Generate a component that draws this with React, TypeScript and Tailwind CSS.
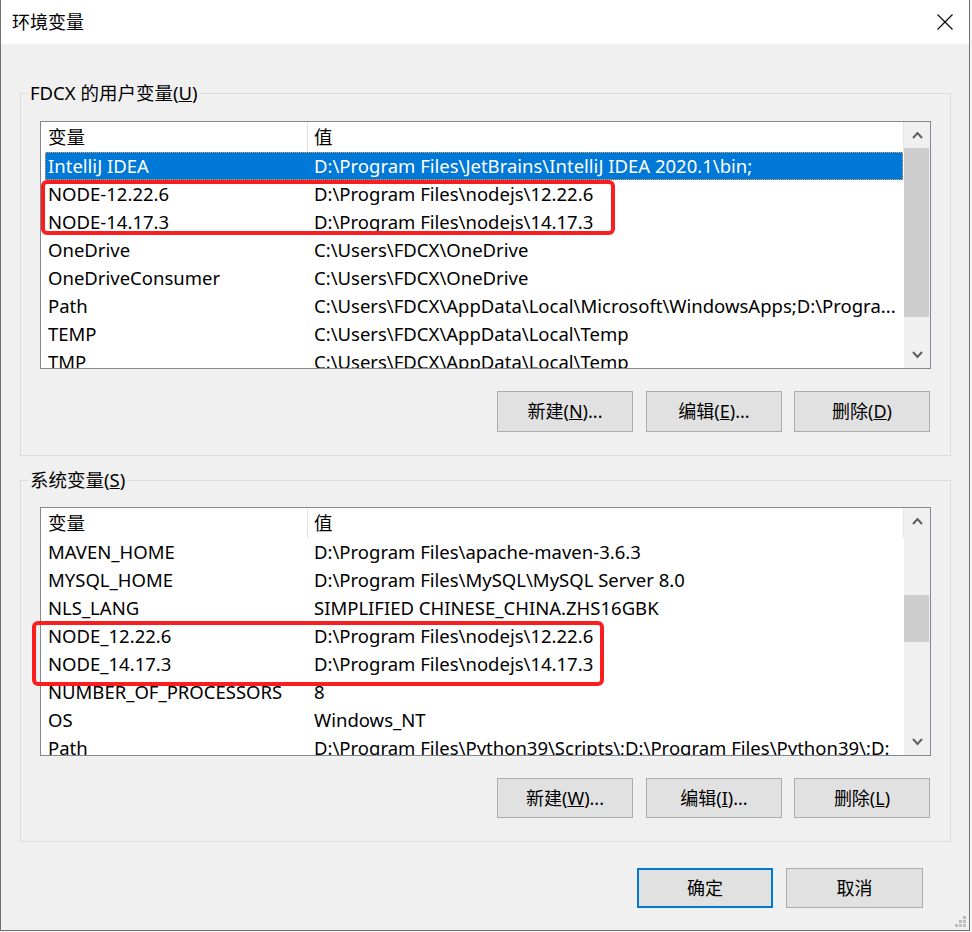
import type { ReactNode } from "react";

const FONT = "font-['Noto_Sans','Noto_Sans_CJK_SC',sans-serif]";

type Row = [string, string];

const userVars: Row[] = [
  ["IntelliJ IDEA", "D:\\Program Files\\JetBrains\\IntelliJ IDEA 2020.1\\bin;"],
  ["NODE-12.22.6", "D:\\Program Files\\nodejs\\12.22.6"],
  ["NODE-14.17.3", "D:\\Program Files\\nodejs\\14.17.3"],
  ["OneDrive", "C:\\Users\\FDCX\\OneDrive"],
  ["OneDriveConsumer", "C:\\Users\\FDCX\\OneDrive"],
  ["Path", "C:\\Users\\FDCX\\AppData\\Local\\Microsoft\\WindowsApps;D:\\Progra..."],
  ["TEMP", "C:\\Users\\FDCX\\AppData\\Local\\Temp"],
  ["TMP", "C:\\Users\\FDCX\\AppData\\Local\\Temp"],
];

const systemVars: Row[] = [
  ["MAVEN_HOME", "D:\\Program Files\\apache-maven-3.6.3"],
  ["MYSQL_HOME", "D:\\Program Files\\MySQL\\MySQL Server 8.0"],
  ["NLS_LANG", "SIMPLIFIED CHINESE_CHINA.ZHS16GBK"],
  ["NODE_12.22.6", "D:\\Program Files\\nodejs\\12.22.6"],
  ["NODE_14.17.3", "D:\\Program Files\\nodejs\\14.17.3"],
  ["NUMBER_OF_PROCESSORS", "8"],
  ["OS", "Windows_NT"],
  ["Path", "D:\\Program Files\\Python39\\Scripts\\;D:\\Program Files\\Python39\\;D:"],
];

export default function App() {
  return (
    <div className={`w-[972px] h-[932px] overflow-hidden bg-[#f5f5f5] text-black ${FONT}`}>
      <div className="relative flex h-[931px] w-[970px] flex-col border border-t-0 border-[#717171] bg-[#f0f0f0]">
        <div className="flex h-[44px] shrink-0 items-center justify-between bg-white pl-[11px] pr-[16px]">
          <span className="text-[18px] leading-none">环境变量</span>
          <svg width="16" height="16" viewBox="0 0 16 16">
            <line x1="0.5" y1="0.5" x2="15.5" y2="15.5" stroke="#000" strokeWidth="1.1" />
            <line x1="15.5" y1="0.5" x2="0.5" y2="15.5" stroke="#000" strokeWidth="1.1" />
          </svg>
        </div>

        <GroupBox
          label={<>FDCX 的用户变量(<u>U</u>)</>}
          className="mt-[37px]"
        >
          <div className="relative mt-[16px]">
            <VarList rows={userVars} selected={0} height="h-[248px]" thumb="h-[169px]" />
            {/* annotation box drawn over the list */}
            <div className="absolute left-[1px] top-[59px] h-[55px] w-[574px] rounded-[6px] border-4 border-[#fa1e1e]" />
          </div>
          <ButtonRow labels={[["新建(", "N", ")..."], ["编辑(", "E", ")..."], ["删除(", "D", ")"]]} height="h-[41px]" />
        </GroupBox>

        <GroupBox label={<>系统变量(<u>S</u>)</>} className="mt-[12px]">
          <div className="relative mt-[15px]">
            <VarList rows={systemVars} height="h-[249px]" thumb="mt-[61px] h-[47px]" />
            <div className="absolute left-[-8px] top-[114px] h-[65px] w-[572px] rounded-[6px] border-4 border-[#fa1e1e]" />
          </div>
          <ButtonRow labels={[["新建(", "W", ")..."], ["编辑(", "I", ")..."], ["删除(", "L", ")"]]} height="h-[40px]" />
        </GroupBox>

        <div className="mt-[26px] flex justify-end gap-[13px] pr-[46px]">
          <button className="h-[40px] w-[136px] border-2 border-[#0078d7] bg-[#e1e1e1] text-[18px]">
            确定
          </button>
          <button className="h-[40px] w-[137px] border border-[#adadad] bg-[#e1e1e1] text-[18px]">
            取消
          </button>
        </div>

        <svg className="absolute bottom-[3px] right-[3px]" width="11" height="11" viewBox="0 0 11 11">
          <rect x="8" y="0" width="3" height="3" fill="#bdbdbd" />
          <rect x="4" y="4" width="3" height="3" fill="#bdbdbd" />
          <rect x="8" y="4" width="3" height="3" fill="#bdbdbd" />
          <rect x="0" y="8" width="3" height="3" fill="#bdbdbd" />
          <rect x="4" y="8" width="3" height="3" fill="#bdbdbd" />
          <rect x="8" y="8" width="3" height="3" fill="#bdbdbd" />
        </svg>
      </div>
    </div>
  );
}

function GroupBox({
  label,
  className,
  children,
}: {
  label: ReactNode;
  className: string;
  children: ReactNode;
}) {
  return (
    <fieldset className={`ml-[19px] w-[931px] border border-[#dcdcdc] ${className}`}>
      <legend className="ml-[7px] px-[2px] text-[18.5px] leading-[24px]">{label}</legend>
      <div className="pb-[23px] pl-[19px]">{children}</div>
    </fieldset>
  );
}

function VarList({
  rows,
  selected,
  height,
  thumb,
}: {
  rows: Row[];
  selected?: number;
  height: string;
  thumb: string;
}) {
  return (
    <div className={`flex w-[891px] border border-[#828790] bg-white text-[18.5px] ${height}`}>
      <div className="flex min-w-0 flex-1 flex-col overflow-hidden">
        <div className="flex h-[30px] shrink-0 items-center border-r border-[#e5e5e5]">
          <div className="flex h-full w-[267px] items-center border-r border-[#e5e5e5] pl-[7px]">变量</div>
          <div className="pl-[6px]">值</div>
        </div>
        {rows.map(([name, value], i) =>
          i === selected ? (
            <div
              key={name}
              className="ml-[4px] flex h-[28px] w-[858px] shrink-0 items-center bg-[#0078d7] text-white outline-1 -outline-offset-1 outline-dotted outline-[#e7a45b]"
            >
              <div className="w-[263px] shrink-0 whitespace-nowrap pl-[3px]">{name}</div>
              <div className="whitespace-nowrap pl-[6px]">{value}</div>
            </div>
          ) : (
            <div key={name} className="flex h-[28px] shrink-0 items-center">
              <div className="w-[267px] shrink-0 whitespace-nowrap pl-[7px]">{name}</div>
              <div className="min-w-0 overflow-hidden whitespace-nowrap pl-[6px]">{value}</div>
            </div>
          ),
        )}
      </div>
      <div className="flex w-[26px] shrink-0 flex-col bg-[#f0f0f0]">
        <div className="flex h-[26px] shrink-0 items-center justify-center">
          <Chevron up />
        </div>
        <div className="flex flex-1 flex-col">
          <div className={`mr-[1px] bg-[#cdcdcd] ${thumb}`} />
        </div>
        <div className="flex h-[26px] shrink-0 items-center justify-center">
          <Chevron />
        </div>
      </div>
    </div>
  );
}

function Chevron({ up }: { up?: boolean }) {
  return (
    <svg width="11" height="8" viewBox="0 0 11 8">
      <polyline
        points={up ? "1,7 5.5,2 10,7" : "1,1 5.5,6 10,1"}
        fill="none"
        stroke="#606060"
        strokeWidth="2"
      />
    </svg>
  );
}

function ButtonRow({
  labels,
  height,
}: {
  labels: [string, string, string][];
  height: string;
}) {
  return (
    <div className="mt-[22px] flex w-[890px] justify-end gap-[12px]">
      {labels.map(([before, key, after]) => (
        <button
          key={key}
          className={`w-[136px] border border-[#adadad] bg-[#e1e1e1] text-[18px] first:mr-[1px] ${height}`}
        >
          {before}
          <u>{key}</u>
          {after}
        </button>
      ))}
    </div>
  );
}
